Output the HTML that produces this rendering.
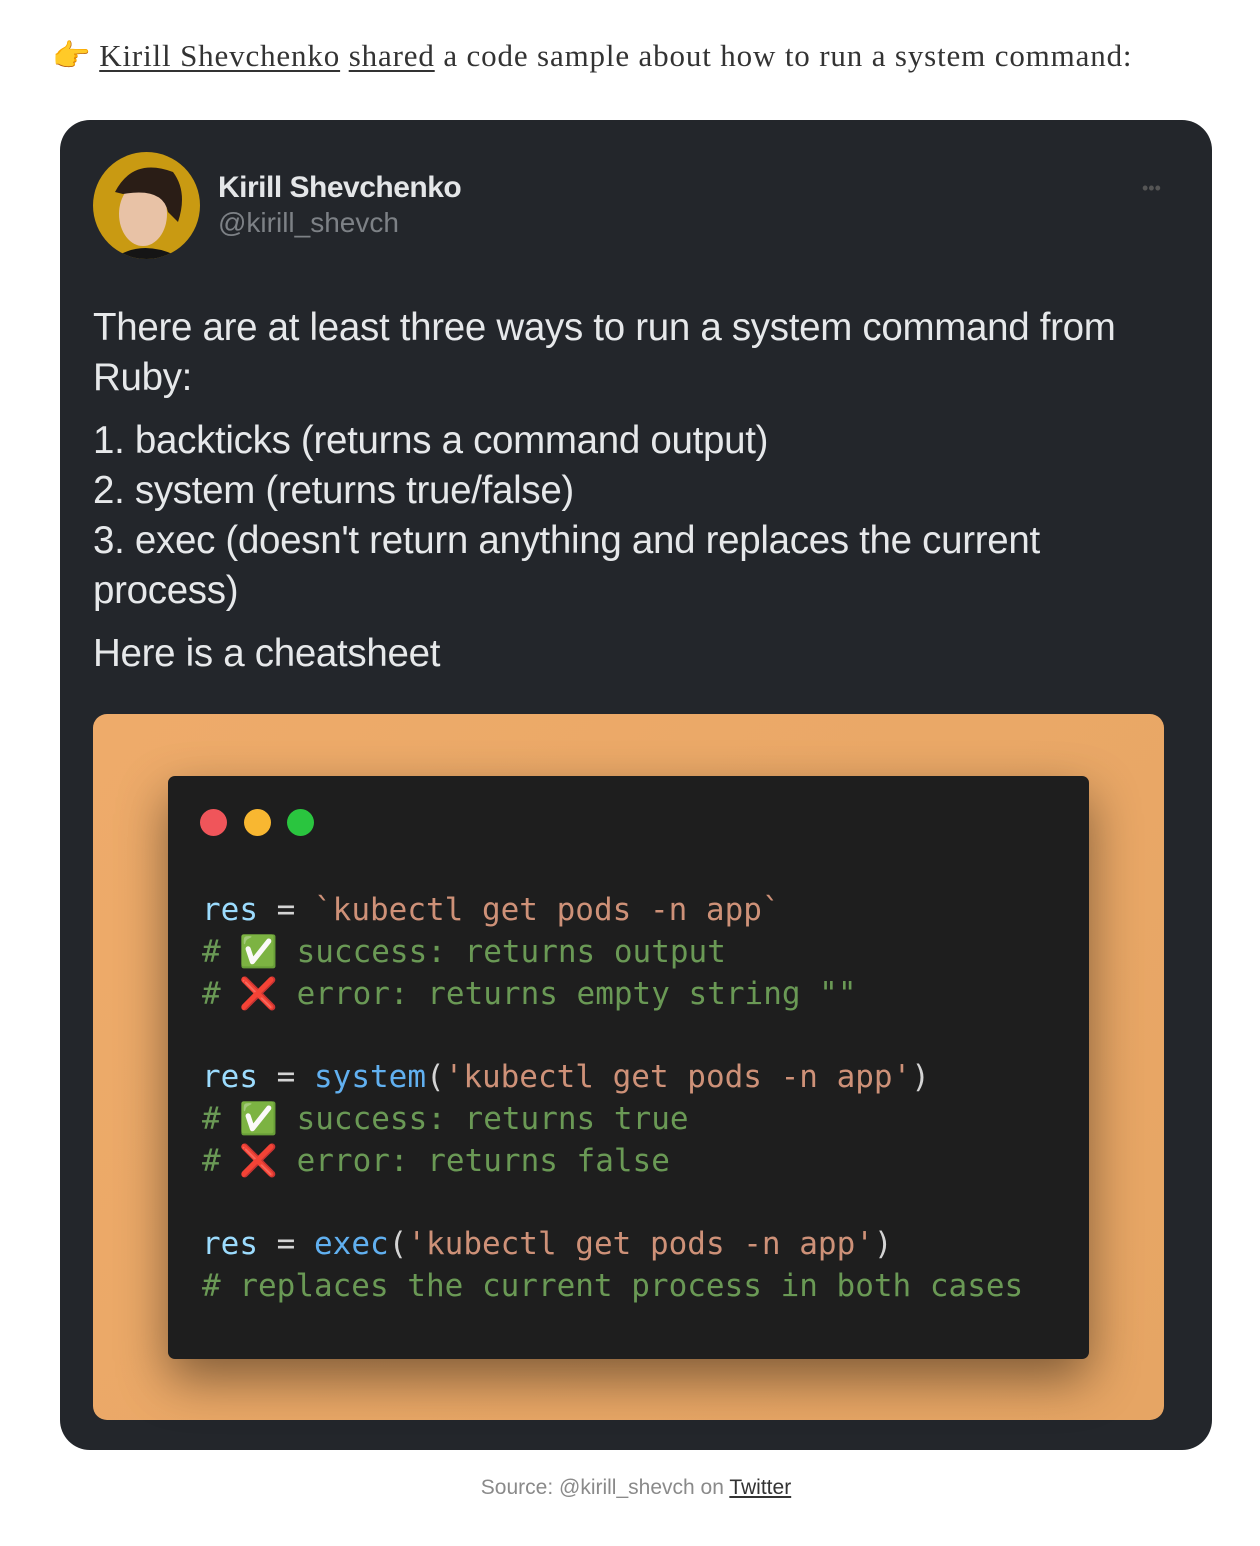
<!DOCTYPE html>
<html><head><meta charset="utf-8"><style>
body{margin:0;background:#fff;width:1260px;height:1546px;position:relative;overflow:hidden}
.top{position:absolute;left:52px;top:37px;font-family:"Liberation Serif",serif;font-size:31px;color:#333;letter-spacing:0.85px;white-space:nowrap}
.top u{text-decoration-thickness:1.5px;text-underline-offset:4px}
.card{position:absolute;left:60px;top:120px;width:1152px;height:1330px;background:#23262b;border-radius:30px}
.av{position:absolute;left:33px;top:32px;width:107px;height:107px;border-radius:50%;background:#c99a12;overflow:hidden}
.name{position:absolute;left:158px;top:51px;font-family:"Liberation Sans",sans-serif;font-weight:bold;font-size:30px;color:#e4e6e8;letter-spacing:-0.5px}
.handle{position:absolute;left:158px;top:87px;font-family:"Liberation Sans",sans-serif;font-size:28px;color:#7d8186}
.dots{position:absolute;left:1082px;top:58px;color:#555;font-size:18px;font-family:"Liberation Sans";letter-spacing:0}
.txt{position:absolute;left:33px;top:183px;width:1060px;font-family:"Liberation Sans",sans-serif;font-size:38.5px;line-height:50px;color:#e6e8ea;letter-spacing:-0.3px}
.txt p{margin:0 0 13px}
.orange{position:absolute;left:33px;top:594px;width:1071px;height:706px;background:linear-gradient(135deg,#eeab6a,#e6a564);border-radius:14px}
.code{position:absolute;left:75px;top:62px;width:921px;height:583px;background:#1e1e1e;border-radius:7px;box-shadow:0 20px 50px rgba(0,0,0,.45)}
.c{position:absolute;width:27px;height:27px;border-radius:50%;top:33px}
pre{position:absolute;left:34px;top:114px;margin:0;font-family:"DejaVu Sans Mono","Liberation Mono",monospace;font-size:31px;line-height:41.8px;color:#d4d4d4}
.v{color:#9cdcfe}.s{color:#ce9178}.f{color:#61b0f0}.g{color:#6a9955}
.cap{position:absolute;top:1476px;left:0;width:1272px;text-align:center;font-family:"Liberation Sans",sans-serif;font-size:21px;color:#8a8a8a}
.cap u{color:#333}
</style></head><body>
<div class="top">👉<span style="letter-spacing:0"> </span><u>Kirill Shevchenko</u> <u>shared</u> a code sample about how to run a system command:</div>
<div class="card">
 <div class="av"><svg width="107" height="107"><ellipse cx="50" cy="62" rx="24" ry="32" fill="#e8c2a6"/><path d="M22 40 Q40 5 80 20 Q95 40 85 70 L75 60 Q70 35 30 42Z" fill="#2a1d16"/><path d="M20 107 Q50 85 90 107Z" fill="#151515"/></svg></div>
 <div class="name">Kirill Shevchenko</div>
 <div class="handle">@kirill_shevch</div>
 <div class="dots">•••</div>
 <div class="txt">
  <p>There are at least three ways to run a system command from Ruby:</p>
  <p>1. backticks (returns a command output)<br>2. system (returns true/false)<br>3. exec (doesn't return anything and replaces the current process)</p>
  <p>Here is a cheatsheet</p>
 </div>
 <div class="orange"><div class="code">
  <div class="c" style="left:32px;background:#f0555a"></div>
  <div class="c" style="left:76px;background:#f8b731"></div>
  <div class="c" style="left:119px;background:#2ac53f"></div>
<pre><span class="v">res</span> = <span class="s">`kubectl get pods -n app`</span>
<span class="g"># ✅ success: returns output</span>
<span class="g"># <span style="color:#e02020">❌</span> error: returns empty string ""</span>

<span class="v">res</span> = <span class="f">system</span>(<span class="s">'kubectl get pods -n app'</span>)
<span class="g"># ✅ success: returns true</span>
<span class="g"># <span style="color:#e02020">❌</span> error: returns false</span>

<span class="v">res</span> = <span class="f">exec</span>(<span class="s">'kubectl get pods -n app'</span>)
<span class="g"># replaces the current process in both cases</span></pre>
 </div></div>
</div>
<div class="cap">Source: @kirill_shevch on <u>Twitter</u></div>
</body></html>
